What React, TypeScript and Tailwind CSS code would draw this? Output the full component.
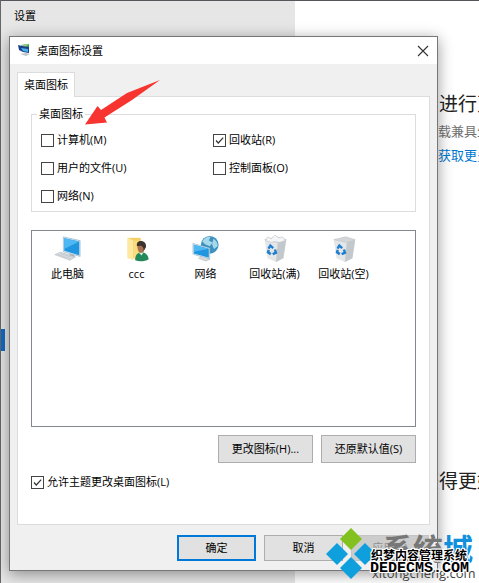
import { useState, type ReactNode } from "react";

function CheckBox({ label, initial = false }: { label: string; initial?: boolean }) {
  const [checked, setChecked] = useState(initial);
  return (
    <label className="flex items-center gap-[3px] whitespace-nowrap">
      <span className="grid size-[13px]">
        <input
          type="checkbox"
          checked={checked}
          onChange={(e) => setChecked(e.target.checked)}
          className="col-start-1 row-start-1 size-[13px] appearance-none border border-[#444] bg-white"
        />
        {checked && (
          <svg viewBox="0 0 13 13" className="pointer-events-none col-start-1 row-start-1 size-[13px]">
            <path d="M3 6.5 5.3 9 10.2 3.6" fill="none" stroke="#333" strokeWidth="1.2" />
          </svg>
        )}
      </span>
      {label}
    </label>
  );
}

function Monitor() {
  return (
    <g>
      <path d="M10 2 28 6v17L10 18Z" fill="#cfe3ef" />
      <path d="M10 2 28 6v17L10 18Z" fill="none" stroke="#8badc2" strokeWidth=".6" />
      <path d="M11 3.4 27 7v14.6L11 17Z" fill="#2196e0" />
      <path d="M11 3.4 27 7 11 15Z" fill="#4db8f2" />
    </g>
  );
}

function ComputerIcon() {
  return (
    <svg viewBox="0 0 30 30" className="size-7">
      <Monitor />
      <path d="m17 20 5 1.4v3l-6-1.4Z" fill="#a9b6bf" />
      <path d="m1 21 6-2.5L23 23.500l-6 3.500Z" fill="#dde2e6" stroke="#a7afb5" strokeWidth=".6" />
      <path d="m4 21 14 4.300M7 20l13 4" stroke="#b3bac0" strokeWidth=".7" />
    </svg>
  );
}

function UserIcon() {
  return (
    <svg viewBox="0 0 30 30" className="size-7">
      <path d="M5 3h14v22H5Z" fill="#f3cf68" />
      <path d="m5 3 6 3v21l-6-3Z" fill="#ffe9a0" />
      <path d="M11 6h9v19h-9Z" fill="#f9dc7e" />
      <path d="M13 27c0-6 3-8.500 7-8.500s7 3 7.500 7.500c-4 2.500-10 3-14.500 1Z" fill="#23895b" />
      <path d="m17 19 3 3 2-3.500Z" fill="#dff0e6" />
      <ellipse cx="19.500" cy="13.500" rx="4" ry="5.500" fill="#a9714d" />
      <path d="M15 12c-1-4 2-6 5-5.500s5.500 3 4.500 7L22 17c.500-3-1-5-3-5.500Z" fill="#3c332e" />
    </svg>
  );
}

function NetworkIcon() {
  return (
    <svg viewBox="0 0 30 30" className="size-7">
      <circle cx="19" cy="10.500" r="9.500" fill="#3d91bd" />
      <path d="M11 7c2-4 6-6 9-5l-2 4 4 2-3 4-5-2Zm12-3c3 2 5 5 4.500 8l-4 3-2-5Z" fill="#a7d8ea" />
      <path d="m1 9 18 5v12L1 20.500Z" fill="#d7e8f1" stroke="#8aafc6" strokeWidth=".6" />
      <path d="m2 10.400 16 4.400v9.700L2 19.700Z" fill="#2196e0" />
      <path d="m2 10.400 16 4.400L2 18Z" fill="#4db8f2" />
      <path d="m7 25 4-2 8 3-4 2Z" fill="#d5dadd" stroke="#a9b1b6" strokeWidth=".5" />
    </svg>
  );
}

function RecycleIcon({ full = false }: { full?: boolean }) {
  return (
    <svg viewBox="0 0 30 30" className="size-7">
      <path d="m4 5 13-3 10 3-3 20-8 4-9-4Z" fill="#e4e6e8" />
      <path d="M18 8 27 5l-3 20-8 4Z" fill="#c3c8cc" />
      <path d="m4 5 13-3 10 3-9 3Z" fill={full ? "#eef0f1" : "#d2d6d9"} stroke="#bfc4c8" strokeWidth=".6" />
      {full && (
        <path d="m5 6 2-4 4 2 4-4 4 3 4-1 3 4-6 2-5-1-4 1Z" fill="#f4f5f6" stroke="#b8bec2" strokeWidth=".6" />
      )}
      <g fill="none" stroke="#1c7fd0" strokeWidth="2.600">
        <path d="m8 14.500 2-3.100 3.100 2.600" />
        <path d="m15 15.500 1 3.500-3.500 1.500" />
        <path d="m10.500 20.500-3-2 .8-2.500" />
      </g>
    </svg>
  );
}

function TitleIcon() {
  return (
    <svg viewBox="0 0 14 14" className="size-[14px]">
      <path d="m3 1 8-1v6l-8 1Z" fill="#3d9b48" />
      <path d="m3 1 8-1-3 3-5 1Z" fill="#8ecb82" />
      <path d="m0 1 4 1 7 1v6l-6-1-4-2Z" fill="#1c3f90" />
      <path d="m3 4 7 1v3L5 7Z" fill="#49b1e8" />
      <path d="m2 10 6-1 4 1-4 2Z" fill="#bcc6cb" />
    </svg>
  );
}

const desktopIcons: { label: string; icon: ReactNode }[] = [
  { label: "此电脑", icon: <ComputerIcon /> },
  { label: "ccc", icon: <UserIcon /> },
  { label: "网络", icon: <NetworkIcon /> },
  { label: "回收站(满)", icon: <RecycleIcon full /> },
  { label: "回收站(空)", icon: <RecycleIcon /> },
];

function SettingsPage() {
  return (
    <div className="flex h-screen overflow-hidden border-t border-l border-t-[#55555a] border-l-[#66666a]">
      <aside className="w-[294px] shrink-0 bg-[#e6e6e6]">
        <h1 className="pt-[7px] pl-[13px] text-[11px] leading-4 text-black">设置</h1>
        <div className="mt-[305px] h-[22px] w-1 bg-[#0f6cc4]" />
      </aside>
      <main className="min-w-0 flex-1 overflow-hidden bg-white whitespace-nowrap">
        <h2 className="pt-[91px] pl-[125px] text-[19px] leading-6 text-[#222]">中进行更改</h2>
        <p className="mt-[3px] pl-[143px] text-[13px] leading-6 text-[#707070]">载兼具生</p>
        <a href="#more" className="block pl-[143px] text-[13px] leading-6 text-[#0078d0]">获取更多</a>
        <h2 className="mt-[302px] pl-[125px] text-[19px] leading-6 text-[#222]">获得更好</h2>
      </main>
    </div>
  );
}

const greyButton = "h-7 border border-[#adadad] bg-[#e1e1e1] text-black";

function Dialog() {
  return (
    <section
      role="dialog"
      aria-label="桌面图标设置"
      className="absolute top-9 right-[41px] left-[9px] border border-[#777] bg-[#f0f0f0] shadow-[0_3px_14px_rgba(0,0,0,0.4)]"
    >
      <header className="flex h-[27px] items-center bg-white pr-2 pl-2">
        <TitleIcon />
        <h2 className="ml-[5px] flex-1">桌面图标设置</h2>
        <button aria-label="关闭" className="flex size-3 items-center justify-center">
          <svg viewBox="0 0 12 12" className="size-3">
            <path d="m1 1 10 10M11 1 1 11" stroke="#333" strokeWidth="1.1" />
          </svg>
        </button>
      </header>

      <div className="px-[7px] pt-2 pb-[9px]">
        <div role="tablist" className="flex">
          <button
            role="tab"
            aria-selected="true"
            className="z-10 -mb-px h-[25px] border border-b-0 border-[#dcdcdc] bg-white px-[6px]"
          >
            桌面图标
          </button>
        </div>

        <div role="tabpanel" className="border border-[#dcdcdc] bg-white px-[13px] pt-[9px] pb-[34px]">
          <fieldset className="border border-[#dcdcdc] pt-1 pb-px pl-[5px]">
            <legend className="px-[2px] leading-4">桌面图标</legend>
            <div className="grid grid-cols-[172px_1fr] auto-rows-[28px] items-center pl-1">
              <CheckBox label="计算机(M)" />
              <CheckBox label="回收站(R)" initial />
              <CheckBox label="用户的文件(U)" />
              <CheckBox label="控制面板(O)" />
              <CheckBox label="网络(N)" />
            </div>
          </fieldset>

          <ul className="mt-[18px] flex h-[197px] border border-[#828790] bg-white pt-1 pl-px">
            {desktopIcons.map(({ label, icon }) => (
              <li key={label} className="flex w-[69px] flex-col items-center gap-[3px] whitespace-nowrap">
                {icon}
                {label}
              </li>
            ))}
          </ul>

          <div className="mt-2 flex justify-end gap-2">
            <button className={`${greyButton} w-[95px]`}>更改图标(H)...</button>
            <button className={`${greyButton} w-[95px]`}>还原默认值(S)</button>
          </div>

          <div className="mt-[11px]">
            <CheckBox label="允许主题更改桌面图标(L)" initial />
          </div>
        </div>

        <footer className="mt-[10px] flex justify-end gap-2 pr-px">
          <button className="h-[26px] w-[79px] border-2 border-[#0078d7] bg-[#e1e1e1] text-black">确定</button>
          <button className="h-[26px] w-[79px] border border-[#adadad] bg-[#e1e1e1] text-black">取消</button>
          <button disabled className="h-[26px] w-[78px] border border-[#c4c4c4] bg-[#cccccc] text-[#909090]">
            应用(A)
          </button>
        </footer>
      </div>
    </section>
  );
}

function Arrow() {
  return (
    <svg viewBox="0 0 76 46" className="pointer-events-none absolute top-[79px] left-[85px] h-[46px] w-[76px]">
      <path d="M0 45.500 12.500 27l3.500 4L42 14 75 1 47 21 19.500 38.500 22 43.500Z" fill="#f7342f" />
    </svg>
  );
}

function Watermark() {
  return (
    <div className="pointer-events-none absolute right-0 bottom-0 h-[56px] w-[154px] whitespace-nowrap">
      <svg viewBox="0 0 52 52" className="absolute top-px left-0 size-[52px]">
        <path d="m26 0 11 11-11 11-11-11Z" fill="#82c11f" />
        <path d="m12 15 11 11-11 11L1 26Z" fill="#0f9fdd" />
        <path d="m40 15 11 11-11 11-11-11Z" fill="#0f9fdd" />
        <path d="m26 29 11 11-11 11-11-11Z" fill="#0f9fdd" />
      </svg>
      <div className="absolute top-[6px] left-[58px] text-[30px] leading-8 font-bold text-[#777]">
        系统<span className="text-[#0f8fdc]">城</span>
      </div>
      <div className="absolute top-[38px] left-[47px] text-[13px] leading-4 text-[#444]">xitongcheng.com</div>
      <div className="absolute top-[21px] left-[46px] text-[12px] leading-4 font-bold text-black [text-shadow:1px_0_#fff,-1px_0_#fff,0_1px_#fff,0_-1px_#fff,1px_1px_#fff,-1px_-1px_#fff,1px_-1px_#fff,-1px_1px_#fff]">
        织梦内容管理系统
      </div>
      <div className="absolute top-[34px] left-[45px] font-['Liberation_Mono',monospace] text-[15px] leading-4 font-bold text-black [text-shadow:1px_0_#fff,-1px_0_#fff,0_1px_#fff,0_-1px_#fff,1px_1px_#fff,-1px_-1px_#fff,1px_-1px_#fff,-1px_1px_#fff]">
        DEDECMS.COM
      </div>
    </div>
  );
}

export default function App() {
  return (
    <div className="relative min-h-screen overflow-hidden font-['Open_Sans','Noto_Sans_CJK_SC',sans-serif] text-[11px] leading-4 text-black">
      <SettingsPage />
      <Dialog />
      <Arrow />
      <Watermark />
    </div>
  );
}
